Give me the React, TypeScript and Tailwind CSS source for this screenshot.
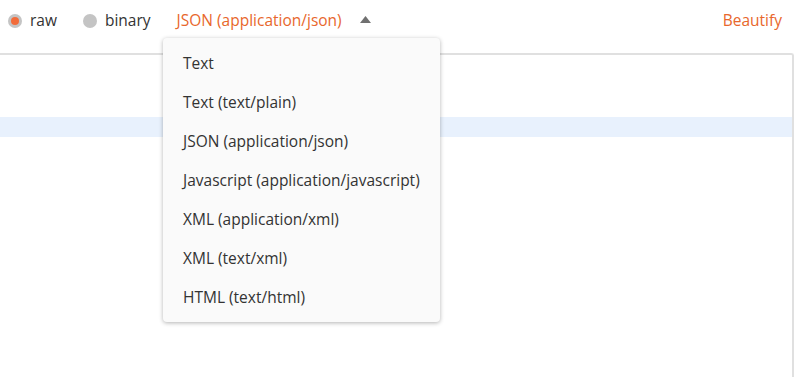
import React from "react";

const items = [
  "Text",
  "Text (text/plain)",
  "JSON (application/json)",
  "Javascript (application/javascript)",
  "XML (application/xml)",
  "XML (text/xml)",
  "HTML (text/html)",
];

export default function App() {
  return (
    <div
      className="relative w-[800px] h-[377px] overflow-hidden bg-white text-[15.5px]"
      style={{ fontFamily: '"Open Sans", "Noto Sans", sans-serif' }}
    >
      <div className="flex items-center h-[41px] pl-[8px] pr-[18px] pt-[1px]">
        <div className="flex items-center gap-[8px]">
          <span className="w-[14px] h-[14px] rounded-full bg-[#c4c4c4] flex items-center justify-center">
            <span className="w-[8px] h-[8px] rounded-full bg-[#f26b3a]" />
          </span>
          <span className="text-[#333]">raw</span>
        </div>
        <div className="flex items-center gap-[8px] ml-[26px]">
          <span className="w-[14px] h-[14px] rounded-full bg-[#c4c4c4]" />
          <span className="text-[#333]">binary</span>
        </div>
        <div className="flex items-center ml-[26px]">
          <span className="text-[#e8672c]">JSON (application/json)</span>
          <svg width="11" height="7" viewBox="0 0 11 7" className="ml-[18px] mb-[3px]">
            <path d="M5.5 0 L11 7 L0 7 Z" fill="#707070" />
          </svg>
        </div>
        <div className="flex-1" />
        <span className="text-[#e8672c]">Beautify</span>
      </div>
      <div className="ml-[-2px] mt-[12px] w-[796px] h-[340px] border-t-2 border-r-2 border-[#e0e0e0] rounded-tr-[3px] pt-[62px]">
        <div className="h-[20px] bg-[#e8f1fd]" />
      </div>
      <div className="absolute left-[163px] top-[38px] w-[277px] h-[284px] bg-[#fafafa] rounded-[4px] shadow-[0_1px_4px_rgba(0,0,0,0.3)] pt-[6px] pb-[2px]">
        {items.map((t) => (
          <div key={t} className="h-[39px] flex items-center pl-[20px] text-[#333] whitespace-nowrap">
            {t}
          </div>
        ))}
      </div>
    </div>
  );
}
